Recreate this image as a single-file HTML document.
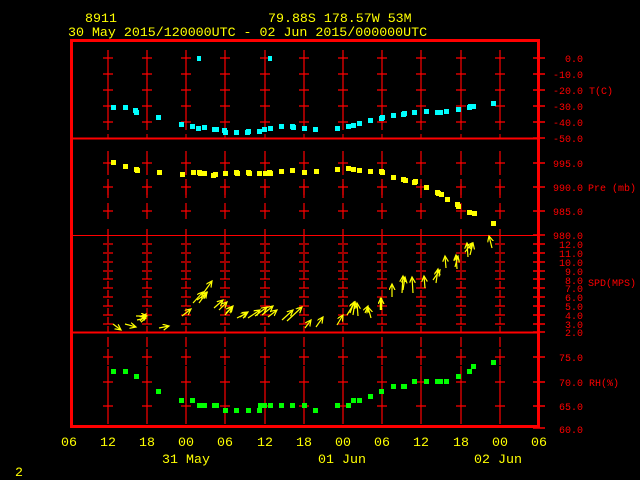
<!DOCTYPE html>
<html><head><meta charset="utf-8"><style>
html,body{margin:0;padding:0;background:#000;width:640px;height:480px;overflow:hidden}
svg{display:block}
text{font-family:"Liberation Mono",monospace}
.y{fill:#ffff00;font-size:13.3px}
.r{fill:#ff0000;font-size:10px}
</style></head><body>
<svg width="640" height="480" viewBox="0 0 640 480" xmlns="http://www.w3.org/2000/svg">
<defs>
<path id="cT" d="M-5,0h10M0,-8v16" stroke="#f00" stroke-width="1.2" fill="none"/>
<path id="cP" d="M-5,0h10M0,-12v24" stroke="#f00" stroke-width="1.2" fill="none"/>
<path id="cR" d="M-5,0h10M0,-8v16" stroke="#f00" stroke-width="1.2" fill="none"/>
<marker id="ah" markerWidth="8" markerHeight="8" refX="6" refY="3" orient="auto" markerUnits="userSpaceOnUse"><path d="M0,0L6,3L0,6" stroke="#ff0" stroke-width="1.2" fill="none"/></marker>
<g id="t1"><use href="#cT" y="58"/><use href="#cT" y="74"/><use href="#cT" y="90"/><use href="#cT" y="106"/><use href="#cT" y="122"/><path d="M0,134v4" stroke="#f00"/></g>
<g id="p1"><use href="#cP" y="163"/><path d="M0,184v14M0,229v6" stroke="#f00" stroke-width="1.2"/><use href="#cT" y="211"/><use href="#cT" y="187"/></g>
<g id="s1"><path d="M0,236V332" stroke="#f00" stroke-width="1.2" stroke-dasharray="7,2"/><path d="M-5,244h10M-5,253h10M-5,262h10M-5,271h10M-5,279h10M-5,288h10M-5,297h10M-5,306h10M-5,315h10M-5,324h10" stroke="#f00" stroke-width="1.2"/></g>
<g id="r1"><use href="#cR" y="357"/><use href="#cR" y="382"/><use href="#cR" y="406"/><path d="M0,337v10M0,366v8M0,390v8M0,414v10" stroke="#f00" stroke-width="1.2"/></g>
</defs>
<text class="y" x="85" y="22">8911</text>
<text class="y" x="268" y="22">79.88S  178.57W    53M</text>
<text class="y" x="68" y="36">30 May 2015/120000UTC - 02 Jun 2015/000000UTC</text>

<rect x="71.5" y="40.5" width="467" height="386" fill="none" stroke="#f00" stroke-width="3"/>
<path d="M71,138.5H540M71,332.5H540" stroke="#f00" stroke-width="2"/>
<path d="M71,235.5H540" stroke="#f00" stroke-width="1"/>

<g>
<use href="#t1" x="108"/><use href="#t1" x="147"/><use href="#t1" x="186"/><use href="#t1" x="225"/><use href="#t1" x="265"/><use href="#t1" x="304"/><use href="#t1" x="343"/><use href="#t1" x="382"/><use href="#t1" x="421"/><use href="#t1" x="461"/><use href="#t1" x="500"/>
<use href="#p1" x="108"/><use href="#p1" x="147"/><use href="#p1" x="186"/><use href="#p1" x="225"/><use href="#p1" x="265"/><use href="#p1" x="304"/><use href="#p1" x="343"/><use href="#p1" x="382"/><use href="#p1" x="421"/><use href="#p1" x="461"/><use href="#p1" x="500"/>
<use href="#s1" x="108"/><use href="#s1" x="147"/><use href="#s1" x="186"/><use href="#s1" x="225"/><use href="#s1" x="265"/><use href="#s1" x="304"/><use href="#s1" x="343"/><use href="#s1" x="382"/><use href="#s1" x="421"/><use href="#s1" x="461"/><use href="#s1" x="500"/>
<use href="#r1" x="108"/><use href="#r1" x="147"/><use href="#r1" x="186"/><use href="#r1" x="225"/><use href="#r1" x="265"/><use href="#r1" x="304"/><use href="#r1" x="343"/><use href="#r1" x="382"/><use href="#r1" x="421"/><use href="#r1" x="461"/><use href="#r1" x="500"/>
</g>
<path d="M533,58h12M533,74h12M533,90h12M533,106h12M533,122h12M533,138h12M533,163h12M533,187h12M533,211h12M533,235h12M533,244h12M533,253h12M533,262h12M533,271h12M533,279h12M533,288h12M533,297h12M533,306h12M533,315h12M533,324h12M533,332h12M533,357h12M533,382h12M533,406h12M533,428h12" stroke="#f00" stroke-width="1.5"/>

<g class="r" text-anchor="end">
<text x="583" y="62">0.0</text><text x="583" y="78">-10.0</text><text x="583" y="94">-20.0</text><text x="583" y="110">-30.0</text><text x="583" y="126">-40.0</text><text x="583" y="142">-50.0</text>
<text x="583" y="167">995.0</text><text x="583" y="191">990.0</text><text x="583" y="215">985.0</text><text x="583" y="239">980.0</text>
<text x="583" y="248">12.0</text><text x="583" y="257">11.0</text><text x="583" y="266">10.0</text><text x="583" y="275">9.0</text><text x="583" y="284">8.0</text><text x="583" y="292">7.0</text><text x="583" y="301">6.0</text><text x="583" y="310">5.0</text><text x="583" y="319">4.0</text><text x="583" y="328">3.0</text><text x="583" y="336">2.0</text>
<text x="583" y="361">75.0</text><text x="583" y="386">70.0</text><text x="583" y="410">65.0</text><text x="583" y="433">60.0</text>
</g>
<g class="r"><text x="589" y="94">T(C)</text><text x="588" y="191">Pre (mb)</text><text x="588" y="286">SPD(MPS)</text><text x="589" y="386">RH(%)</text></g>

<g class="y" text-anchor="middle">
<text x="69" y="446">06</text><text x="108" y="446">12</text><text x="147" y="446">18</text><text x="186" y="446">00</text><text x="225" y="446">06</text><text x="265" y="446">12</text><text x="304" y="446">18</text><text x="343" y="446">00</text><text x="382" y="446">06</text><text x="421" y="446">12</text><text x="461" y="446">18</text><text x="500" y="446">00</text><text x="539" y="446">06</text>
<text x="186" y="463">31 May</text><text x="342" y="463">01 Jun</text><text x="498" y="463">02 Jun</text>
</g>
<text class="y" x="15" y="476">2</text>

<g fill="#00ffff">
<rect x="111" y="105" width="5" height="5"/><rect x="123" y="105" width="5" height="5"/><rect x="133" y="108" width="5" height="5"/><rect x="134" y="110" width="5" height="5"/><rect x="156" y="115" width="5" height="5"/><rect x="179" y="122" width="5" height="5"/><rect x="190" y="124" width="5" height="5"/><rect x="196" y="126" width="5" height="5"/><rect x="202" y="125" width="5" height="5"/><rect x="212" y="127" width="5" height="5"/><rect x="214" y="127" width="5" height="5"/><rect x="222" y="128" width="5" height="5"/><rect x="223" y="130" width="5" height="5"/><rect x="234" y="130" width="5" height="5"/><rect x="245" y="130" width="5" height="5"/><rect x="246" y="129" width="5" height="5"/><rect x="257" y="129" width="5" height="5"/><rect x="262" y="127" width="5" height="5"/><rect x="268" y="126" width="5" height="5"/><rect x="279" y="124" width="5" height="5"/><rect x="290" y="124" width="5" height="5"/><rect x="291" y="125" width="5" height="5"/><rect x="302" y="126" width="5" height="5"/><rect x="313" y="127" width="5" height="5"/><rect x="335" y="126" width="5" height="5"/><rect x="346" y="124" width="5" height="5"/><rect x="351" y="123" width="5" height="5"/><rect x="357" y="121" width="5" height="5"/><rect x="368" y="118" width="5" height="5"/><rect x="379" y="116" width="5" height="5"/><rect x="380" y="115" width="5" height="5"/><rect x="391" y="113" width="5" height="5"/><rect x="401" y="112" width="5" height="5"/><rect x="402" y="111" width="5" height="5"/><rect x="412" y="110" width="5" height="5"/><rect x="424" y="109" width="5" height="5"/><rect x="435" y="110" width="5" height="5"/><rect x="438" y="110" width="5" height="5"/><rect x="444" y="109" width="5" height="5"/><rect x="456" y="107" width="5" height="5"/><rect x="467" y="105" width="5" height="5"/><rect x="468" y="104" width="5" height="5"/><rect x="471" y="104" width="5" height="5"/><rect x="491" y="101" width="5" height="5"/><rect x="197" y="56" width="4" height="5"/><rect x="268" y="56" width="4" height="5"/>
</g>
<g fill="#ffff00">
<rect x="111" y="160" width="5" height="5"/><rect x="123" y="164" width="5" height="5"/><rect x="134" y="167" width="5" height="5"/><rect x="135" y="168" width="5" height="5"/><rect x="157" y="170" width="5" height="5"/><rect x="180" y="172" width="5" height="5"/><rect x="191" y="170" width="5" height="5"/><rect x="197" y="170" width="5" height="5"/><rect x="198" y="171" width="5" height="5"/><rect x="202" y="171" width="5" height="5"/><rect x="211" y="173" width="5" height="5"/><rect x="213" y="172" width="5" height="5"/><rect x="223" y="171" width="5" height="5"/><rect x="234" y="170" width="5" height="5"/><rect x="235" y="171" width="5" height="5"/><rect x="246" y="170" width="5" height="5"/><rect x="247" y="171" width="5" height="5"/><rect x="257" y="171" width="5" height="5"/><rect x="263" y="171" width="5" height="5"/><rect x="267" y="170" width="5" height="5"/><rect x="268" y="171" width="5" height="5"/><rect x="279" y="169" width="5" height="5"/><rect x="290" y="168" width="5" height="5"/><rect x="302" y="170" width="5" height="5"/><rect x="314" y="169" width="5" height="5"/><rect x="335" y="167" width="5" height="5"/><rect x="346" y="166" width="5" height="5"/><rect x="351" y="167" width="5" height="5"/><rect x="357" y="168" width="5" height="5"/><rect x="368" y="169" width="5" height="5"/><rect x="379" y="169" width="5" height="5"/><rect x="380" y="170" width="5" height="5"/><rect x="391" y="175" width="5" height="5"/><rect x="401" y="177" width="5" height="5"/><rect x="403" y="178" width="5" height="5"/><rect x="412" y="180" width="5" height="5"/><rect x="413" y="179" width="5" height="5"/><rect x="424" y="185" width="5" height="5"/><rect x="435" y="190" width="5" height="5"/><rect x="436" y="191" width="5" height="5"/><rect x="439" y="192" width="5" height="5"/><rect x="445" y="197" width="5" height="5"/><rect x="455" y="202" width="5" height="5"/><rect x="456" y="204" width="5" height="5"/><rect x="467" y="210" width="5" height="5"/><rect x="472" y="211" width="5" height="5"/><rect x="491" y="221" width="5" height="5"/>
</g>
<g fill="#00ff00">
<rect x="111" y="369" width="5" height="5"/><rect x="123" y="369" width="5" height="5"/><rect x="134" y="374" width="5" height="5"/><rect x="156" y="389" width="5" height="5"/><rect x="179" y="398" width="5" height="5"/><rect x="190" y="398" width="5" height="5"/><rect x="197" y="403" width="5" height="5"/><rect x="202" y="403" width="5" height="5"/><rect x="212" y="403" width="5" height="5"/><rect x="214" y="403" width="5" height="5"/><rect x="223" y="408" width="5" height="5"/><rect x="234" y="408" width="5" height="5"/><rect x="246" y="408" width="5" height="5"/><rect x="257" y="408" width="5" height="5"/><rect x="258" y="403" width="5" height="5"/><rect x="262" y="403" width="5" height="5"/><rect x="268" y="403" width="5" height="5"/><rect x="279" y="403" width="5" height="5"/><rect x="290" y="403" width="5" height="5"/><rect x="302" y="403" width="5" height="5"/><rect x="313" y="408" width="5" height="5"/><rect x="335" y="403" width="5" height="5"/><rect x="346" y="403" width="5" height="5"/><rect x="351" y="398" width="5" height="5"/><rect x="357" y="398" width="5" height="5"/><rect x="368" y="394" width="5" height="5"/><rect x="379" y="389" width="5" height="5"/><rect x="391" y="384" width="5" height="5"/><rect x="401" y="384" width="5" height="5"/><rect x="402" y="384" width="5" height="5"/><rect x="412" y="379" width="5" height="5"/><rect x="424" y="379" width="5" height="5"/><rect x="435" y="379" width="5" height="5"/><rect x="438" y="379" width="5" height="5"/><rect x="444" y="379" width="5" height="5"/><rect x="456" y="374" width="5" height="5"/><rect x="467" y="369" width="5" height="5"/><rect x="471" y="364" width="5" height="5"/><rect x="491" y="360" width="5" height="5"/>
</g>
<g stroke="#ffff00" stroke-width="1.2" fill="none" marker-end="url(#ah)">
<path d="M113,324L121,330"/><path d="M125,324L136,327"/>
<path d="M136,316L147,316"/><path d="M137,320L146,318"/><path d="M140,321L146,314"/>
<path d="M159,328L169,326"/><path d="M182,316L191,309"/>
<path d="M193,303L203,292"/><path d="M197,300L207,293"/><path d="M202,295L212,281"/><path d="M199,303L207,292"/>
<path d="M214,308L223,300"/><path d="M219,310L227,302"/><path d="M225,315L233,306"/><path d="M226,313L232,307"/>
<path d="M237,318L247,313"/><path d="M240,317L248,312"/>
<path d="M248,318L260,310"/><path d="M255,316L267,307"/><path d="M262,315L273,306"/><path d="M268,317L277,310"/>
<path d="M282,320L293,310"/><path d="M287,321L302,307"/>
<path d="M305,328L311,320"/><path d="M316,327L323,317"/><path d="M337,325L343,315"/>
<path d="M347,315L355,302"/><path d="M350,313L354,302"/><path d="M353,315L355,302"/><path d="M358,316L357,303"/>
<path d="M365,313L368,306"/><path d="M371,318L368,307"/>
<path d="M381,310L381,298" stroke-width="2.5"/>
<path d="M392,297L392,284"/>
<path d="M402,293L403,276"/><path d="M413,293L412,277"/><path d="M403,290L405,277"/>
<path d="M425,288L424,276"/><path d="M436,283L438,269"/><path d="M433,280L440,270"/>
<path d="M446,268L445,256"/><path d="M457,269L456,255"/><path d="M455,267L458,256"/>
<path d="M468,257L467,243"/><path d="M465,252L472,243"/><path d="M470,255L473,243"/>
<path d="M492,248L489,236"/>
</g>
</svg>
</body></html>
